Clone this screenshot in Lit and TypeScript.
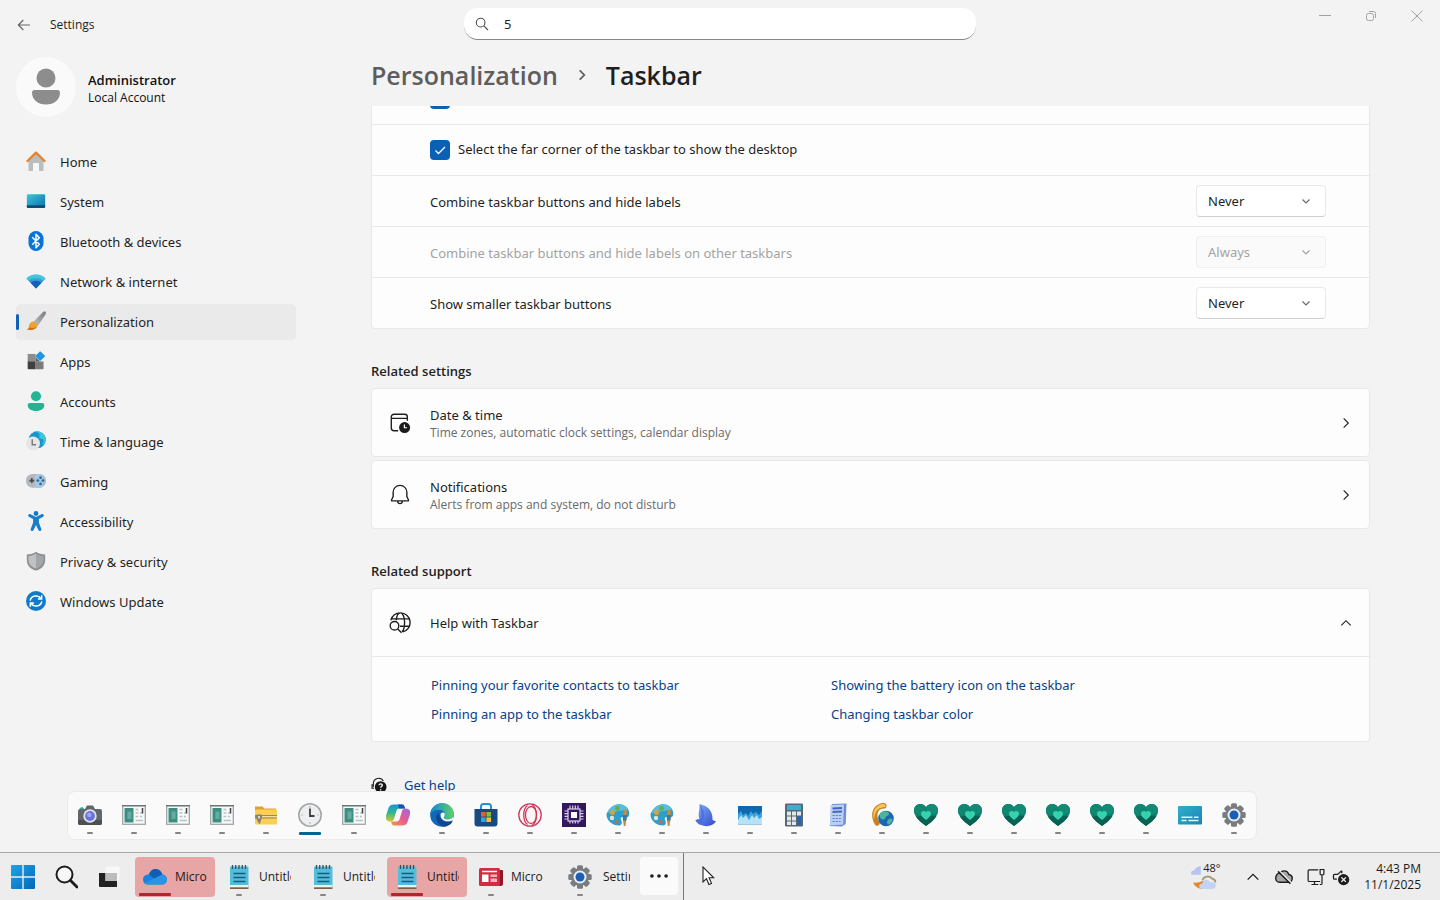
import { LitElement, html, css, svg, TemplateResult } from "lit";
import { customElement } from "lit/decorators.js";
import { classMap } from "lit/directives/class-map.js";

const chevronDown = svg`<path d="M3.500 5.500 7 9l3.500-3.500" fill="none" stroke="currentColor" stroke-width="1.200"/>`;

/* Every glyph is drawn on a 24 x 24 grid. */
const glyphs: Record<string, TemplateResult> = {
  back: svg`<path d="M21 12H4M11 4.500 3.500 12l7.500 7.500" fill="none" stroke="#666" stroke-width="1.800"/>`,
  search: svg`<g fill="none" stroke="currentColor" stroke-width="1.600"><circle cx="10" cy="10" r="6.500"/><path d="M14.700 14.700l6.300 6.300"/></g>`,
  right: svg`<path d="M8 4l8 8-8 8" fill="none" stroke="currentColor" stroke-width="1.900"/>`,
  crumb: svg`<path d="M8.500 5l7 7-7 7" fill="none" stroke="currentColor" stroke-width="2.600"/>`,
  up: svg`<path d="M4 16l8-8 8 8" fill="none" stroke="currentColor" stroke-width="1.900"/>`,
  home: svg`<path d="M3 10.500 12 3l9 7.500V23a1 1 0 0 1-1 1h-4.500v-8.500a1 1 0 0 0-1-1h-5a1 1 0 0 0-1 1V24H4a1 1 0 0 1-1-1z" fill="#bdbdc1"/><path d="M15.500 24v-8.500a1 1 0 0 0-1-1h-5a1 1 0 0 0-1 1V24z" fill="#f7f7f7"/><path d="M1.800 12 12 2l10.200 10" fill="none" stroke="#e8822a" stroke-width="2.800" stroke-linejoin="round" stroke-linecap="round"/>`,
  system: svg`<defs><linearGradient id="g-sys" x1="0" y1="0" x2="1" y2="1"><stop offset="0" stop-color="#3fc6dc"/><stop offset="1" stop-color="#0a6ea8"/></linearGradient></defs><rect x="1" y="4" width="22" height="16.500" rx="1.500" fill="url(#g-sys)"/><path d="M1 17h22v2a1.500 1.500 0 0 1-1.500 1.500h-19A1.500 1.500 0 0 1 1 19z" fill="#0d4f74"/>`,
  bluetooth: svg`<rect x="3" y="0" width="18" height="24" rx="9" fill="#0a74d6"/><path d="M7.500 7.500 16 16l-4 4V4l4 4-8.500 8.500" fill="none" stroke="#fff" stroke-width="1.800" stroke-linejoin="round"/>`,
  network: svg`<defs><linearGradient id="g-net" x1="0" y1="0" x2="0" y2="1"><stop offset="0" stop-color="#48cfe6"/><stop offset="1" stop-color="#1458b8"/></linearGradient></defs><path d="M.5 9C7 2.500 17 2.500 23.500 9L12 21z" fill="url(#g-net)"/><path d="M.5 9C7 2.500 17 2.500 23.500 9l-2.500 2.700C16 7 8 7 3 11.700z" fill="#45c4de"/><path d="M5.500 14.200c3.500-3.500 9.500-3.500 13 0L12 21z" fill="#1560bd"/>`,
  personalization: svg`<defs><linearGradient id="g-per" x1="1" y1="0" x2="0" y2="1"><stop offset="0" stop-color="#77797f"/><stop offset="1" stop-color="#c2c4c8"/></linearGradient></defs><path d="M23.500 1c.8.900.3 2.500-.6 4L14 18 8.500 13.500 19.500 2c1.200-1.200 3.300-1.900 4-1z" fill="url(#g-per)"/><path d="M8.500 12.500c2 .3 5 3 5.100 5-.8 5-6.600 6.200-12.600 4.700 2.200-.8 2.300-2.500 2.600-4.500.4-2.700 2.400-4.900 4.900-5.200z" fill="#f0a030"/><path d="M1 22.200c5 1.200 10.500.3 12.300-3.200-3 2-7.300 1.500-9.600.8-.3 1-1.200 1.900-2.700 2.400z" fill="#cf6f1c"/>`,
  apps: svg`<path d="M2 3.500h9.500V13H2z" fill="#8c8c8c"/><path d="M2 12.500h9.500V22H3a1 1 0 0 1-1-1z" fill="#3f3f3f"/><path d="M11.500 12.500H21V21a1 1 0 0 1-1 1h-8.500z" fill="#7b7b7b"/><path d="M11.500 7.500l5.500 5h-5.500z" fill="#606060"/><rect x="12.800" y="1.800" width="8.600" height="8.600" rx="1" transform="rotate(45 17 6)" fill="#1f97e0"/>`,
  accounts: svg`<circle cx="12" cy="6.300" r="6.100" fill="#25b494"/><path d="M2 16.800c0-1.500 1-2.500 2.500-2.500h15c1.500 0 2.500 1 2.500 2.500 0 4.500-4 7.200-10 7.200S2 21.300 2 16.800z" fill="#1fb592"/>`,
  time: svg`<circle cx="13.500" cy="10.500" r="10.300" fill="#1796c9"/><path d="M8 1.700C14 0 17 2.500 16 6s1.500 3.500 3.500 3.500 2 4-1.500 7.500c3.500-1 5.800-3.800 5.800-6.500C23.800 4.500 19 .2 13.500.2 11.500.2 9.500.8 8 1.700z" fill="#3fc4e0"/><circle cx="8.500" cy="15" r="8.300" fill="#e6e6e7"/><path d="M7.500 10v6.500H12" fill="none" stroke="#7a7a7a" stroke-width="1.700"/>`,
  gaming: svg`<rect x="0" y="3.500" width="24" height="16.500" rx="8" fill="#b4b8bd"/><rect x="10.500" y="3.500" width="10" height="16.500" rx="3" fill="#a9c8e4"/><path d="M7 8.500v6M4 11.500h6" stroke="#4a4a4a" stroke-width="1.900"/><circle cx="17.500" cy="8" r="1.700" fill="#2b6ea8"/><circle cx="14.200" cy="11.500" r="1.700" fill="#2b6ea8"/><circle cx="20.300" cy="11.500" r="1.700" fill="#2b6ea8"/><circle cx="17.500" cy="15.500" r="1.700" fill="#2b6ea8"/>`,
  accessibility: svg`<circle cx="12" cy="3" r="2.900" fill="#1779c4"/><path d="M2.800 4.500c.6-1.100 1.700-1.200 2.700-.7L12 7.200l6.500-3.400c1-.5 2.100-.4 2.700.7s.1 2.100-1 2.700L15.500 9.700V14l2.900 7.500c.4 1.100-.1 2.100-1 2.500-1.100.3-2.100-.1-2.500-1.100L12 16.700l-2.900 6.200c-.4 1-1.400 1.400-2.500 1.100-.9-.4-1.400-1.400-1-2.500L8.500 14V9.700L3.800 7.200c-1.100-.6-1.600-1.600-1-2.700z" fill="#1b7cc8"/>`,
  shield: svg`<path d="M12 .8c3 2.200 6.500 3.200 11 3.400V11c0 6-4 10.300-11 12.500C5 21.300 1 17 1 11V4.200C5.500 4 9 3 12 .8z" fill="#8d8f92"/><path d="M12 3v18C7 19 3 16 3 11V6.200C6.800 5.800 9.500 4.800 12 3z" fill="#c0c1c3"/><path d="M12 3v18c5-2 9-5 9-10V6.200C17.200 5.800 14.500 4.800 12 3z" fill="#a3a5a8"/>`,
  update: svg`<circle cx="12" cy="12" r="12" fill="#0f7ac8"/><path d="M5 11.500C6 5.500 14.500 4 18 9M18.800 5v4.500h-4.500M19 12.500c-1 6-9.500 7.500-13 2.500M5.200 19v-4.500h4.500" fill="none" stroke="#fff" stroke-width="1.800"/>`,
  calendar: svg`<g fill="none" stroke="#1f1f1f" stroke-width="1.500"><path d="M10 20.500H5.500a3 3 0 0 1-3-3V5.500a3 3 0 0 1 3-3H17a3 3 0 0 1 3 3v4M2.500 7H20"/></g><circle cx="17" cy="17" r="6" fill="#1a1a1a"/><path d="M16.800 13.500v3.700h2.900" fill="none" stroke="#fff" stroke-width="1.300"/>`,
  bell: svg`<path d="M12 1.500a7.500 7.500 0 0 0-7.500 7.500v4.700L2.700 17.500a.6.600 0 0 0 .6.900h17.400a.6.600 0 0 0 .6-.9l-1.800-3.800V9A7.500 7.500 0 0 0 12 1.500zM9.300 18.500c.2 1.900 1.200 2.900 2.700 2.900s2.500-1 2.700-2.900" fill="none" stroke="#1f1f1f" stroke-width="1.500"/>`,
  globe: svg`<g fill="none" stroke="#1f1f1f" stroke-width="1.500"><path d="M2 9C3.500 4 7.500 1 12.500 1A10.500 10.500 0 0 1 15 21.700M3 7.500h19.500M12 15.500h10.500M8 9c.3-4.500 2-8 4.500-8s4.500 4.500 4.500 10c0 5-1 9.500-3 10.500"/><circle cx="6" cy="15" r="4.700"/><path d="m9.500 18.500 4.200 4.200"/></g>`,
  help: svg`<path d="M3.500 15v-5a8 8 0 0 1 15-4M3.500 11.500H1.500V17h3" fill="none" stroke="#1f1f1f" stroke-width="1.600"/><circle cx="14.500" cy="15" r="8.800" fill="#151515"/><path d="M12 12.500c.2-3.200 5.300-3 5 0-.2 1.700-2.400 1.800-2.500 3.700M14.500 18.200v2" fill="none" stroke="#fff" stroke-width="1.900"/>`,

  camera: svg`<path d="M7 6l2-3.500h6L17 6h5a2 2 0 0 1 2 2v12a2 2 0 0 1-2 2H2a2 2 0 0 1-2-2V8a2 2 0 0 1 2-2z" fill="#63676c"/><path d="M0 17h24v3a2 2 0 0 1-2 2H2a2 2 0 0 1-2-2z" fill="#4c4f53"/><path d="M1.500 6.200C1.500 4 6 3.500 6 6.200z" fill="#2fa8a0"/><circle cx="12" cy="13" r="6.700" fill="#dfe3ea"/><circle cx="12" cy="13" r="4.900" fill="#6a73dd"/><circle cx="11.300" cy="12" r="2.200" fill="#9ea6f5"/>`,
  panel: svg`<rect x="0.700" y="2.700" width="22.600" height="18.600" fill="#f8f9f9" stroke="#a0a6a8" stroke-width="1.300"/><path d="M0 2.700h24" stroke="#6f7679" stroke-width="1.400"/><path d="M2.500 5h9v14.500h-9z" fill="#3c8f80"/><path d="M5.500 8.500h4V16h-4z" fill="#67ab9f"/><path d="M13.500 6.500h3M13.500 10h3M13.500 13.500h3M18 10h2M18 13.500h2M13.500 17.500h7.500" stroke="#b9c3c6" stroke-width="1.500"/><path d="M20.500 5v5.500" stroke="#3c4346" stroke-width="1.500"/>`,
  folder: svg`<path d="M1 3.500h7.500l2 2H22V9H1z" fill="#e0a22c"/><rect x="1" y="6.500" width="22" height="15" rx="1" fill="#fbcf55"/><path d="M1 12h22v3.500H1z" fill="#9b8a50"/><path d="M8 13.700h15" stroke="#f9e3a0" stroke-width="1.300"/><path d="M2.500 11.500h5V16L5.500 21.500 2.500 16z" fill="#85817a"/><path d="M4 13h2v2.500H4z" fill="#d9d6cf"/>`,
  clock: svg`<circle cx="12" cy="12" r="11.200" fill="#eceeef" stroke="#a3a7aa" stroke-width="1.600"/><path d="M12 3v2M12 19v2M3 12h2M19 12h2" stroke="#b9bcbe" stroke-width="1.200"/><path d="M12 5.500V13h4.500" fill="none" stroke="#3b4043" stroke-width="1.800"/>`,
  copilot: svg`<defs><linearGradient id="g-cop1" x1="0" y1="0" x2="0" y2="1"><stop offset="0" stop-color="#1794dc"/><stop offset=".5" stop-color="#36b78b"/><stop offset="1" stop-color="#d8c52d"/></linearGradient><linearGradient id="g-cop2" x1="1" y1="0" x2="0" y2="1"><stop offset="0" stop-color="#9a68e3"/><stop offset=".5" stop-color="#e85b94"/><stop offset="1" stop-color="#f59a3d"/></linearGradient></defs><path d="M8 1.500h8c2 0 2.500 2 3 4h-5.500c-2 0-2.700 1-3.300 3L8 16c-.5 1.500-1.500 2.500-3.500 2.500-4 0-5.500-2.500-4.300-6.500L2.500 5c1-2.500 2.500-3.500 5.500-3.500z" fill="url(#g-cop1)"/><path d="M16 22.500H8c-2 0-2.500-2-3-4h5.500c2 0 2.700-1 3.300-3L16 8c.5-1.500 1.500-2.500 3.500-2.500 4 0 5.500 2.500 4.300 6.500l-2.300 7c-1 2.500-2.500 3.500-5.500 3.500z" fill="url(#g-cop2)"/><path d="M12 1.500h4c2 0 2.500 2 3 4h-6z" fill="#1c50b8"/>`,
  edge: svg`<defs><linearGradient id="g-edge" x1="0" y1="0" x2="1" y2="0"><stop offset="0" stop-color="#1487d5"/><stop offset="1" stop-color="#5fd168"/></linearGradient></defs><circle cx="12" cy="12" r="11.800" fill="#0f68b8"/><path d="M.3 11C1 4.500 6 .2 12 .2c7 0 11.800 5 11.800 10.300 0 4-3 6-6 6-2.500 0-4-1-4-2 0-.8 1-1.300 1-3.500 0-2.500-2.500-4-5.500-4C5 7 1.500 8.500.3 11z" fill="url(#g-edge)"/><path d="M9 9.500c-5 3-3 12.500 5 14.200C20 23.500 22.500 19 22.500 18c-7 3.500-14-1-13.500-8.500z" fill="#12458c"/><path d="M14.800 11c0 2.200-1 2.700-1 3.500 0 1 1.500 2 4 2 2.500 0 4.500-1.200 5.500-3v3.200c-5.500 3.500-14 1.300-12.500-6.200 1.500-1.500 4-1 4 .5z" fill="#fafafa"/>`,
  store: svg`<path d="M7 6V3.500C7 2 8 1 9.500 1h5C16 1 17 2 17 3.500V6" fill="none" stroke="#2791d7" stroke-width="2"/><path d="M.5 6h23v14.500a3 3 0 0 1-3 3h-17a3 3 0 0 1-3-3z" fill="#174a80"/><path d="M7 9h4.600v4.600H7z" fill="#ef5b38"/><path d="M12.400 9H17v4.600h-4.600z" fill="#84bd3b"/><path d="M7 14.400h4.600V19H7z" fill="#2ba6e6"/><path d="M12.400 14.400H17V19h-4.600z" fill="#fbc12d"/>`,
  opera: svg`<circle cx="12" cy="12" r="11.200" fill="#fdf3f5"/><g fill="none" stroke="#c93a5c" stroke-width="1.300"><circle cx="12" cy="12" r="11.200"/><ellipse cx="13" cy="12" rx="5.500" ry="8.500"/><path d="M9.500 2.500C4.500 6 4.500 18 9.500 21.500M14 1.500c6 4 6 17 0 21"/></g>`,
  chip: svg`<rect width="24" height="24" fill="#34185f"/><g fill="none" stroke="#d9cdf0" stroke-width="1.200"><rect x="6" y="6" width="12" height="12"/><path d="M8 6V2.500M10.700 6V2.500M13.300 6V2.500M16 6V2.500M8 18v2.500M10.700 18v2.500M13.300 18v2.500M16 18v2.500M6 8H2.500M6 10.700H2.500M6 13.300H2.500M6 16H2.500M18 8h3.500M18 10.700h3.500M18 13.300h3.500M18 16h3.500"/></g><rect x="9" y="9" width="6" height="6" fill="#fff"/>`,
  paint: svg`<path d="M11 1.500c7-1 12.500 4 12.300 9.500-.3 4-3.500 3.500-6 3-2.500-.4-3 1.500-2 3.500 1.300 2.500.2 5-2.300 5C6 22.500.5 17.500.5 11.500.5 10 4.500 2.500 11 1.500z" fill="#2d9fcc"/><path d="M11 1.500c5-.7 9.500 1.500 11.300 5L1.500 10C3.500 5.500 6.500 2.200 11 1.500z" fill="#54c0dc"/><circle cx="6.500" cy="9.500" r="2.500" fill="#d9a13a"/><circle cx="11.500" cy="5.500" r="2.400" fill="#6cab45"/><circle cx="6" cy="15" r="2.200" fill="#e5e2d8"/><circle cx="10.500" cy="19" r="1.900" fill="#d8683e"/><path d="M17.500 7.500c1-1 3-1 3.500 0l-.8 9.500-.7 6h-1.700L17 17z" fill="#c88a3f"/><path d="M16.500 12h4.600l-.6 5.500H17z" fill="#397c9c"/>`,
  fin: svg`<defs><linearGradient id="g-fin" x1="0" y1="0" x2="1" y2="1"><stop offset="0" stop-color="#7fb4f5"/><stop offset="1" stop-color="#3346cf"/></linearGradient></defs><path d="M5.500 1C15 3 19 9 18.500 17l3.500 1.500c-3 4.500-9 5.500-13.500 4-3-1-6-3-7-5.500l4-1C3.500 12 6 6 5.500 1z" fill="url(#g-fin)"/><path d="M5.500 1c2 5 3 11 1.500 15L1.500 17c1 2.500 3 4 5 5C12 16 10.500 7 5.500 1z" fill="#4a6ee0"/>`,
  chart: svg`<rect y="3" width="24" height="18.500" fill="#1169ad"/><path d="M0 11l3-3 2 4 3-2 2 3 3-5 2 3 3-2 3 3 3-4v8H0z" fill="#3ba3e0"/><path d="M0 17l3-5 2 3 3-3 3 5 3-5 2 3 3-3 2 4 3-2v7.500H0z" fill="#b6e2f8"/>`,
  calculator: svg`<rect x="3" y="0.500" width="18" height="23" rx="1.200" fill="#596973"/><path d="M5 2h14v5H5z" fill="#3bb0cc"/><path d="M5 8.500h4v4H5zM10 8.500h4v4h-4zM15 8.500h4v4h-4zM5 13.500h4v4H5zM10 13.500h4v4h-4zM5 18.500h4V22H5zM10 18.500h4V22h-4z" fill="#e3e8ea"/><path d="M15 13.500h4V22h-4z" fill="#2762ad"/>`,
  notes: svg`<path d="M6 1 20.500.5l-.8 20.500-4 2.500-12-.5z" fill="#6d8ed6"/><path d="m4.500 2 13.500-.5-.8 20L4 22.500z" fill="#b9cff6"/><path d="M6.500 5.500l9.500-.5M6.500 9l9.500-.5" stroke="#4667bd" stroke-width="2"/><path d="M6.500 12.500h9M6.500 15.500h9M6.500 18.500h8" stroke="#5f82cd" stroke-width="1.200" stroke-dasharray="2.200 1"/>`,
  dialer: svg`<path d="M13 0c2.500-.3 4 1.500 3.500 3.500S14 6 12.500 5.500C9.500 6 8 8 7.500 11c-.3 2 .3 4.500 1 6.500 1.300.5 2 2 1 3.700C8.500 23 6 23.300 5 21.500 2.500 18 1.500 13 2.500 9 3.700 4 8 .5 13 0z" fill="#c9811f"/><path d="M13 1C8 1.500 4.700 5 3.700 9.500c-.6 2.500-.3 5 .3 7.500 1-9.500 4-12.500 11.500-13 .5-1.700-.5-3.300-2.500-3z" fill="#f6c75a"/><circle cx="16" cy="15.500" r="7.800" fill="#1c66b4"/><path d="M11 9.800c3-2.500 8-1.500 8 1s-3 1.500-3.500 4-4 2-5 .5-1.500-3.500.5-5.500zM19 16c2-1 4 0 3.500 1.500s-3 4.500-4.500 4-1-4.500 1-5.500z" fill="#4bb59a"/>`,
  heart: svg`<path d="M12 23C5 18 0 13 0 7.500 0 3.500 3 1 6.300 1 9 1 11 2.300 12 4.300 13 2.300 15 1 17.700 1 21 1 24 3.500 24 7.500 24 13 19 18 12 23z" fill="#0d7e6c"/><path d="M12 4.300C13 2.300 15 1 17.700 1 21 1 24 3.500 24 7.500c0 1-.2 2-.5 3L12 12z" fill="#128a75"/><path d="M0 7.500C0 3.500 3 1 6.300 1 9 1 11 2.300 12 4.300V12L1 11.500c-.6-1.300-1-2.600-1-4z" fill="#118670"/><path d="M12 23C8 20 4 17 2 13.500l10-1 10.500.500C20.500 17 16 20 12 23z" fill="#086152"/><path d="M12 17c-3.200-2.300-5-4.200-5-6.500 0-2.700 3.600-3.600 5-1.300 1.400-2.300 5-1.400 5 1.300 0 2.300-1.800 4.200-5 6.500z" fill="#35d2ad"/>`,
  captions: svg`<defs><linearGradient id="g-cap" x1="0" y1="0" x2="1" y2="1"><stop offset="0" stop-color="#2eb0c8"/><stop offset="1" stop-color="#1c83b8"/></linearGradient></defs><rect y="3" width="24" height="18.500" rx="1" fill="url(#g-cap)"/><path d="M3.500 14.200h11M16 14.200h4.500M3.500 17.500h5M10.500 17.500h10" stroke="#e3f6fb" stroke-width="1.500"/>`,
  gear: svg`<g fill="#797c80"><rect x="9" y="0.300" width="6" height="23.400" rx="1.500"/><rect x="9" y="0.300" width="6" height="23.400" rx="1.500" transform="rotate(45 12 12)"/><rect x="9" y="0.300" width="6" height="23.400" rx="1.500" transform="rotate(90 12 12)"/><rect x="9" y="0.300" width="6" height="23.400" rx="1.500" transform="rotate(135 12 12)"/><circle cx="12" cy="12" r="9"/></g><circle cx="12" cy="12" r="6.500" fill="#e9eef4"/><circle cx="12" cy="12" r="4.500" fill="#1b5fb5"/>`,

  start: svg`<defs><linearGradient id="g-start" x1="0" y1="0" x2="1" y2="1"><stop offset="0" stop-color="#1ea4e8"/><stop offset="1" stop-color="#0566b8"/></linearGradient></defs><path d="M0 1a1 1 0 0 1 1-1h10.300v11.300H0zM12.700 0H23a1 1 0 0 1 1 1v10.300H12.700zM0 12.700h11.300V24H1a1 1 0 0 1-1-1zM12.700 12.700H24V23a1 1 0 0 1-1 1H12.700z" fill="url(#g-start)"/>`,
  find: svg`<g fill="none" stroke="#1c1c1c"><circle cx="10.500" cy="9.500" r="8" stroke-width="2" fill="#f7f7f7"/><path d="m16.500 15.500 6.500 6.500" stroke-width="2.800" stroke-linecap="round"/></g>`,
  taskview: svg`<rect x="8.500" y="1.500" width="14" height="14" rx="1" fill="#f8f8f8"/><path d="M2 8h6.500v8H20v6H3a1 1 0 0 1-1-1z" fill="#222"/><path d="M8.500 8H20v8H8.500z" fill="#bdbdbd"/>`,
  onedrive: svg`<path d="M6 9.500C7.500 5.500 10 4 12.500 4c3.500 0 6 2.500 6.800 5.500 3 .3 4.700 2.500 4.700 5 0 3-2.200 5-5 5H5c-2.800 0-5-2-5-5s2.500-5.200 6-5z" fill="#1a84dd"/><path d="M6 9.500C7.500 5.500 10 4 12.500 4c3.500 0 6 2.500 6.800 5.500L12 14z" fill="#0f5fb4"/><path d="M1.500 18 19.300 9.500c3 .3 4.700 2.500 4.700 5 0 3-2.200 5-5 5H5c-1.500 0-2.700-.600-3.500-1.500z" fill="#2b93e6"/>`,
  notepad: svg`<rect x="3" y="1.500" width="18.500" height="21" rx="1" fill="#54bddc"/><path d="M3 21h18.500v3H3z" fill="#80603f"/><path d="M3 20h18.500v2.300H3z" fill="#e9f4f7"/><path d="M6.500 8.500h12M6.500 12.500h12M6.500 16.500h12" stroke="#175c7a" stroke-width="1.600"/><path d="M5.500 0v4M8.700 0v4M12 0v4M15.300 0v4M18.500 0v4" stroke="#36505c" stroke-width="1.300"/>`,
  news: svg`<path d="M20 5h3a1 1 0 0 1 1 1v13a2 2 0 0 1-2 2h-3z" fill="#8e1626"/><rect y="3" width="21" height="18" rx="1.500" fill="#d52b41"/><path d="M3 6.500h15" stroke="#fff" stroke-width="1.500"/><path d="M3 9.500h6.500V17H3z" fill="#fff"/><path d="M11.500 9.500h6.500V12h-6.500zM11.500 13.500h6.500V17h-6.500z" fill="#f5b7be"/>`,
  more: svg`<g fill="#1d1d1d"><circle cx="3.500" cy="12" r="2.200"/><circle cx="12" cy="12" r="2.200"/><circle cx="20.500" cy="12" r="2.200"/></g>`,
  weather: svg`<path d="M0 8.500C0 7 1.500 6 2.500 6c1-.5 1.500-2 3-3L9 1.500V10H1.500C.6 10 0 9.500 0 8.500z" fill="#b6c4ef"/><path d="M2 17c3 .8 6 0 9-1.500l5 6C11 24.500 4 22.500 2 17z" fill="#e0882a"/><path d="M10.500 18c.3-2.500 1.500-3.500 3.500-3.500 1.600 0 2.800.7 3.300 2.200 3-.3 5.700.8 5.700 3.100 0 2-1.500 3.200-3.700 3.200h-8.300c-2 0-3.500-1-3.500-2.500 0-1.600 1.200-2.500 3-2.500z" fill="#c2d3f4"/><path d="M10.500 15c1-4 7-4.500 9-1.500 2 .3 3 1.500 3 3.500" fill="none" stroke="#a59a78" stroke-width="1.700"/>`,
  cloudoff: svg`<path d="M7 6.500c1.200-1.700 3-2.700 5.200-2.700 3.200 0 5.300 2 6 4.800 2.800.4 4.800 2.300 4.800 5S21 19 18.500 19H6c-2.800 0-5-2.200-5-5.500 0-3.500 2.700-6.300 6-7z" fill="#a8a8a8" stroke="#1d1d1d" stroke-width="1.900"/><path d="M6 4l16 16" stroke="#f3f3f3" stroke-width="2"/><path d="M4 4.500 20.500 21" stroke="#1d1d1d" stroke-width="1.900"/>`,
  monitor: svg`<g fill="none" stroke="#1d1d1d" stroke-width="1.600"><path d="M15 2.500H3A1.500 1.500 0 0 0 1.500 4v12.500A1.500 1.500 0 0 0 3 18h14.500M10 18v3.500M6 22h9"/><path d="M17.500 2h5v6a1 1 0 0 1-1 1h-3a1 1 0 0 1-1-1zM20 9v11.500a1.500 1.500 0 0 1-1.500 1.500H17"/></g>`,
  muted: svg`<path d="M13 3.500 7.500 8.500H3.200A1.200 1.200 0 0 0 2 9.700v4a1.200 1.200 0 0 0 1.200 1.200H6.500M13 3.500V7" fill="none" stroke="#1d1d1d" stroke-width="1.700"/><circle cx="15.500" cy="15.500" r="7.500" fill="#1d1d1d"/><path d="m12.500 12.500 6 6M18.500 12.500l-6 6" stroke="#fff" stroke-width="1.700"/>`,
};

const icon = (name: string, size = 24) => html`
  <svg class="icon" width=${size} height=${size} viewBox="0 0 24 24" aria-hidden="true">${glyphs[name]}</svg>
`;

const navItems = [
  { icon: "home", label: "Home" },
  { icon: "system", label: "System" },
  { icon: "bluetooth", label: "Bluetooth & devices" },
  { icon: "network", label: "Network & internet" },
  { icon: "personalization", label: "Personalization" },
  { icon: "apps", label: "Apps" },
  { icon: "accounts", label: "Accounts" },
  { icon: "time", label: "Time & language" },
  { icon: "gaming", label: "Gaming" },
  { icon: "accessibility", label: "Accessibility" },
  { icon: "shield", label: "Privacy & security" },
  { icon: "update", label: "Windows Update" },
];

const selectRows = [
  { id: "combine", label: "Combine taskbar buttons and hide labels", value: "Never", disabled: false },
  { id: "combine-other", label: "Combine taskbar buttons and hide labels on other taskbars", value: "Always", disabled: true },
  { id: "smaller", label: "Show smaller taskbar buttons", value: "Never", disabled: false },
];

const related = [
  { icon: "calendar", title: "Date & time", text: "Time zones, automatic clock settings, calendar display" },
  { icon: "bell", title: "Notifications", text: "Alerts from apps and system, do not disturb" },
];

const supportLinks = [
  "Pinning your favorite contacts to taskbar",
  "Showing the battery icon on the taskbar",
  "Pinning an app to the taskbar",
  "Changing taskbar color",
];

const overflowApps = [
  "camera", "panel", "panel", "panel", "folder", "clock", "panel", "copilot", "edge",
  "store", "opera", "chip", "paint", "paint", "fin", "chart", "calculator", "notes",
  "dialer", "heart", "heart", "heart", "heart", "heart", "heart", "captions", "gear",
];
const notRunning = new Set(["copilot", "captions"]);

const windows = [
  { icon: "onedrive", label: "Micro", alert: true },
  { icon: "notepad", label: "Untitled", alert: false },
  { icon: "notepad", label: "Untitled", alert: false },
  { icon: "notepad", label: "Untitled", alert: true },
  { icon: "news", label: "Micro", alert: false },
];

@customElement("app-root")
export class AppRoot extends LitElement {
  static styles = css`
    :host {
      display: block;
      font-family: "Noto Sans", "Open Sans", sans-serif;
      font-size: 13px;
      line-height: 20px;
      color: #1f1f1f;
    }
    * { box-sizing: border-box; }
    button, input, select { font: inherit; color: inherit; margin: 0; }
    button { border: 0; background: none; padding: 0; cursor: default; text-align: left; }
    a { color: #0b3f86; text-decoration: none; }
    .icon { display: block; flex: none; }
    .screen {
      position: relative;
      height: 100vh;
      display: flex;
      flex-direction: column;
      overflow: hidden;
      background: #f3f3f3;
    }

    .titlebar {
      flex: none;
      display: grid;
      grid-template-columns: 1fr minmax(200px, 512px) 1fr;
      height: 48px;
    }
    .app-name {
      display: flex;
      align-items: center;
      gap: 18px;
      padding: 2px 0 0 16px;
      font-family: "Open Sans", sans-serif;
      font-size: 12px;
    }
    .search {
      align-self: center;
      display: flex;
      align-items: center;
      gap: 14px;
      height: 32px;
      padding: 0 10px;
      background: #fff;
      border-bottom: 1px solid #868686;
      border-radius: 14px;
      color: #4a4a4a;
    }
    .search input { flex: 1; min-width: 0; border: 0; outline: 0; background: none; padding: 0; color: #1f1f1f; }
    .controls { justify-self: end; display: flex; }
    .controls button { width: 46px; height: 32px; display: grid; place-items: center; color: #a2a2a2; }

    .body { flex: 1; min-height: 0; display: flex; }
    .sidebar { flex: none; width: 320px; padding: 8px 24px 0 16px; }
    .account { display: flex; align-items: center; gap: 12px; height: 62px; }
    .avatar { width: 60px; height: 60px; border-radius: 50%; background: #fafafa; }
    .account-text { padding-top: 4px; color: #111; line-height: 18px; font-family: "Open Sans", sans-serif; }
    .account-name { font-weight: 600; }
    .account-type { font-size: 12px; }
    nav { display: flex; flex-direction: column; gap: 4px; padding-top: 26px; }
    .nav-item {
      position: relative;
      display: flex;
      align-items: center;
      gap: 14px;
      height: 36px;
      padding-left: 10px;
      border-radius: 4px;
      color: #1f1f1f;
    }
    .nav-item .icon { margin-bottom: 2px; }
    .nav-item.active { background: #eaeaea; }
    .nav-item.active::before {
      content: "";
      position: absolute;
      left: 0;
      top: 10px;
      width: 3px;
      height: 16px;
      border-radius: 2px;
      background: #0f62b5;
    }

    main { flex: 1; min-width: 0; display: flex; flex-direction: column; padding: 0 70px 0 51px; }
    h1, h2 { font-family: "Open Sans", sans-serif; font-weight: 600; }
    h1 {
      flex: none;
      display: flex;
      align-items: center;
      gap: 16px;
      height: 58px;
      margin: 0;
      font-size: 25px;
      line-height: 36px;
      padding-bottom: 4px;
    }
    h1 a { color: #5d5d5d; }
    h1 .icon { color: #5d5d5d; }
    .scroller { flex: 1; min-height: 0; overflow-y: auto; scrollbar-width: none; }
    .content { max-width: 1000px; padding-bottom: 80px; }
    .card { background: #fdfdfd; border: 1px solid #e8e8e8; border-radius: 4px; }
    .row {
      display: flex;
      align-items: center;
      justify-content: space-between;
      height: 51px;
      padding: 0 43px 0 58px;
      border-bottom: 1px solid #e8e8e8;
    }
    .row:last-child { height: 50px; border-bottom: 0; }
    .row > label { padding-top: 2px; }
    .row.disabled { color: #a3a3a3; }
    .check { display: flex; align-items: flex-start; gap: 8px; line-height: 18px; }
    .box { display: grid; width: 20px; height: 20px; }
    .box input, .box svg { grid-area: 1 / 1; }
    .box input { appearance: none; width: 20px; height: 20px; border-radius: 4px; background: #0a60b5; }
    .box svg { pointer-events: none; }
    .select { display: grid; align-items: center; width: 130px; color: #1f1f1f; }
    .select select, .select svg { grid-area: 1 / 1; }
    .select svg { justify-self: end; margin-right: 13px; color: #6a6a6a; pointer-events: none; }
    .select select {
      appearance: none;
      height: 32px;
      padding: 0 32px 0 11px;
      border: 1px solid #e9e9e9;
      border-bottom-color: #cfcfcf;
      border-radius: 4px;
      background: #fff;
      opacity: 1;
    }
    .select select:disabled { background: #fafafa; border-color: #efefef; color: #a3a3a3; }
    .select select:disabled + svg { color: #a3a3a3; }
    h2 { margin: 32px 0 7px; font-size: 13px; line-height: 20px; }
    .stack { display: flex; flex-direction: column; gap: 3px; }
    .link-card {
      display: flex;
      align-items: center;
      gap: 19px;
      width: 100%;
      height: 69px;
      padding: 0 16px 0 17px;
      color: #1f1f1f;
    }
    .link-text { flex: 1; }
    .stack .link-text { padding-top: 2px; }
    .title, .sub { display: block; line-height: 18px; }
    .sub { font-family: "Open Sans", sans-serif; font-size: 12px; color: #6a6a6a; }
    .support .link-card { height: 67px; }
    .support-links {
      display: grid;
      grid-template-columns: 400px 1fr;
      row-gap: 9px;
      padding: 18px 17px 17px 59px;
      border-top: 1px solid #e8e8e8;
    }
    .get-help { display: flex; align-items: center; gap: 17px; margin-top: 33px; }

    .flyout {
      position: absolute;
      left: 67px;
      bottom: 60px;
      display: flex;
      height: 49px;
      background: #fafafa;
      border: 1px solid #ebebeb;
      border-radius: 8px;
    }
    .flyout button {
      width: 44px;
      display: flex;
      flex-direction: column;
      align-items: center;
      padding-top: 11px;
      gap: 5px;
    }
    .dot { width: 6px; height: 2px; border-radius: 1px; background: #858585; }
    .dot.focus { width: 22px; height: 3px; background: #0c6290; }
    .dot.off { background: none; }

    .taskbar {
      flex: none;
      display: flex;
      align-items: stretch;
      justify-content: space-between;
      height: 48px;
      border-top: 1px solid #a9a9a9;
      background: #ededed;
      font-family: "Open Sans", sans-serif;
      font-size: 12px;
      color: #1a1a1a;
    }
    .left { display: flex; align-items: center; padding: 0 5px 0 1px; border-right: 1px solid #777; }
    .pin { width: 43px; height: 40px; display: grid; place-items: center; }
    .windows { display: flex; gap: 4px; padding: 0 9px 0 5px; }
    .task {
      position: relative;
      display: flex;
      align-items: center;
      gap: 8px;
      width: 80px;
      height: 40px;
      padding: 0 8px;
      border-radius: 4px;
    }
    .task.narrow { width: 76px; padding-right: 6px; gap: 11px; }
    .task.alert { background: #e8a5a5; }
    .task-label { flex: 1; min-width: 0; overflow: hidden; white-space: nowrap; line-height: 20px; }
    .task .dot { position: absolute; bottom: 1px; left: 17px; }
    .task.alert .dot { left: 4px; width: 32px; height: 3px; background: #b3262d; }
    .last { display: flex; gap: 4px; }
    .more { width: 38px; height: 38px; display: grid; place-items: center; border-radius: 4px; background: #fafafa; }
    .tray { display: flex; align-items: center; padding-right: 19px; }
    .weather { position: relative; width: 30px; height: 30px; display: grid; align-items: center; margin-right: 24px; }
    .temp { position: absolute; left: 12px; top: 0; font-size: 11px; line-height: 12px; }
    .tray-icons { display: flex; align-items: center; gap: 14px; }
    .pair { display: flex; gap: 7px; align-items: center; }
    .clock { margin-left: 14px; text-align: right; line-height: 16px; }
    .pointer { position: absolute; left: 702px; bottom: 14px; }
  `;

  firstUpdated() {
    const scroller = this.renderRoot.querySelector(".scroller");
    if (scroller) scroller.scrollTop = 33;
  }

  private checkRow(id: string, label: string) {
    return html`
      <div class="row">
        <div class="check">
          <span class="box">
            <input type="checkbox" id=${id} checked />
            <svg width="20" height="20" viewBox="0 0 20 20" aria-hidden="true">
              <path d="m5.500 10.500 3 3 6.500-6.500" fill="none" stroke="#fff" stroke-width="1.300" />
            </svg>
          </span>
          <label for=${id}>${label}</label>
        </div>
      </div>
    `;
  }

  private renderTitlebar() {
    return html`
      <header class="titlebar">
        <div class="app-name">
          <button aria-label="Back">${icon("back", 16)}</button>
          <span>Settings</span>
        </div>
        <div class="search">
          ${icon("search", 16)}
          <input type="text" aria-label="Find a setting" .value=${"5"} />
        </div>
        <div class="controls">
          <button aria-label="Minimize"><svg width="12" height="12"><path d="M0 5.500h12" stroke="currentColor" /></svg></button>
          <button aria-label="Restore">
            <svg width="12" height="12" fill="none" stroke="currentColor">
              <rect x="1.500" y="3.500" width="7" height="7" rx="2" /><path d="M4 1.500h4.500a2 2 0 0 1 2 2V8" />
            </svg>
          </button>
          <button aria-label="Close"><svg width="12" height="12"><path d="M.5.5l11 11M11.500.5l-11 11" stroke="currentColor" /></svg></button>
        </div>
      </header>
    `;
  }

  private renderSidebar() {
    return html`
      <aside class="sidebar">
        <div class="account">
          <svg class="avatar" viewBox="0 0 60 60" aria-hidden="true">
            <circle cx="30" cy="21" r="9.500" fill="#8d8d8d" />
            <path d="M16 35.500c0-1.500 1-2.500 2.500-2.500h23c1.500 0 2.500 1 2.500 2.500C44 43 38 47.500 30 47.500S16 43 16 35.500z" fill="#8d8d8d" />
          </svg>
          <div class="account-text">
            <div class="account-name">Administrator</div>
            <div class="account-type">Local Account</div>
          </div>
        </div>
        <nav>
          ${navItems.map(
            (n) => html`<a href="#" class=${classMap({ "nav-item": true, active: n.icon === "personalization" })}>${icon(n.icon, 20)}<span>${n.label}</span></a>`
          )}
        </nav>
      </aside>
    `;
  }

  private renderContent() {
    return html`
      <div class="content">
        <section class="card">
          ${this.checkRow("share", "Share any window from my taskbar")}
          ${this.checkRow("corner", "Select the far corner of the taskbar to show the desktop")}
          ${selectRows.map(
            (r) => html`
              <div class=${classMap({ row: true, disabled: r.disabled })}>
                <label for=${r.id}>${r.label}</label>
                <span class="select">
                  <select id=${r.id} ?disabled=${r.disabled}><option>${r.value}</option></select>
                  <svg width="14" height="14" aria-hidden="true">${chevronDown}</svg>
                </span>
              </div>
            `
          )}
        </section>
        <h2>Related settings</h2>
        <div class="stack">
          ${related.map(
            (r) => html`
              <a href="#" class="card link-card">
                ${icon(r.icon, 22)}
                <span class="link-text"><span class="title">${r.title}</span><span class="sub">${r.text}</span></span>
                ${icon("right", 14)}
              </a>
            `
          )}
        </div>
        <h2>Related support</h2>
        <section class="card support">
          <button class="link-card" aria-expanded="true">
            ${icon("globe", 22)}
            <span class="link-text">Help with Taskbar</span>
            ${icon("up", 14)}
          </button>
          <div class="support-links">${supportLinks.map((l) => html`<span><a href="#">${l}</a></span>`)}</div>
        </section>
        <div class="get-help">${icon("help", 16)}<a href="#">Get help</a></div>
      </div>
    `;
  }

  private renderTaskbar() {
    return html`
      <footer class="taskbar">
        <div class="left">
          <button class="pin" aria-label="Start">${icon("start", 24)}</button>
          <button class="pin" aria-label="Search">${icon("find", 24)}</button>
          <button class="pin" aria-label="Task view">${icon("taskview", 24)}</button>
          <div class="windows">
            ${windows.map(
              (w) => html`
                <button class=${classMap({ task: true, alert: w.alert })}>
                  ${icon(w.icon, 24)}<span class="task-label">${w.label}</span><span class="dot"></span>
                </button>
              `
            )}
          </div>
          <div class="last">
            <button class="task narrow">${icon("gear", 24)}<span class="task-label">Settings</span><span class="dot"></span></button>
            <button class="more" aria-label="More apps">${icon("more", 20)}</button>
          </div>
        </div>
        <div class="tray">
          <div class="weather">${icon("weather", 26)}<span class="temp">48°</span></div>
          <div class="tray-icons">
            ${icon("up", 16)} ${icon("cloudoff", 18)}
            <div class="pair">${icon("monitor", 18)} ${icon("muted", 18)}</div>
          </div>
          <div class="clock"><div>4:43 PM</div><div>11/1/2025</div></div>
        </div>
      </footer>
    `;
  }

  render() {
    return html`
      <div class="screen">
        ${this.renderTitlebar()}
        <div class="body">
          ${this.renderSidebar()}
          <main>
            <h1><a href="#">Personalization</a>${icon("crumb", 16)}<span>Taskbar</span></h1>
            <div class="scroller">${this.renderContent()}</div>
          </main>
        </div>
        ${this.renderTaskbar()}
        <div class="flyout">
          ${overflowApps.map(
            (a) => html`
              <button aria-label=${a}>
                ${icon(a, 24)}<span class=${classMap({ dot: true, focus: a === "clock", off: notRunning.has(a) })}></span>
              </button>
            `
          )}
        </div>
        <svg class="pointer" width="13" height="20" viewBox="0 0 13 20" aria-hidden="true">
          <path d="M1 1v15l3.500-3.300 2.400 5.800 2.600-1.100L7.100 11.800h4.700z" fill="#fff" stroke="#222" stroke-width="1.100" />
        </svg>
      </div>
    `;
  }
}
